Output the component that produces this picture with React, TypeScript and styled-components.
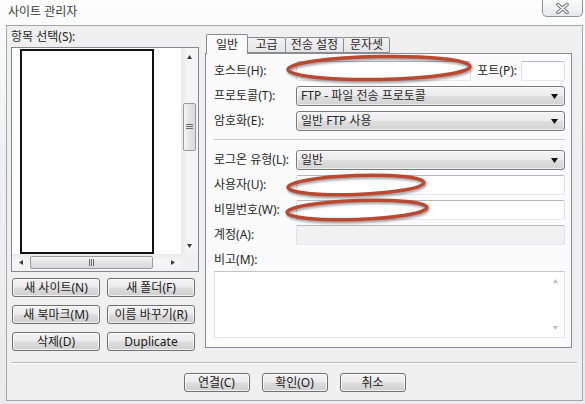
import styled, { createGlobalStyle } from 'styled-components'

const GlobalStyle = createGlobalStyle`
  html, body {
    margin: 0;
    padding: 0;
  }
  body {
    background: #ffffff;
    font-family: "Noto Sans", "Noto Sans CJK KR", sans-serif;
    font-size: 12px;
    color: #262626;
  }
`

const Frame = styled.div`
  position: relative;
  width: 585px;
  height: 404px;
  display: flex;
  flex-direction: column;
  background: linear-gradient(#fdfdfd, #eef0f3 40%, #e9ecef);
  overflow: hidden;
`

const TitleBar = styled.div`
  height: 25px;
  display: flex;
  justify-content: space-between;
  align-items: flex-start;
  padding-left: 8px;
  box-sizing: border-box;
`

const TitleText = styled.span`
  line-height: 24px;
  color: #3a3a3a;
`

const CloseButton = styled.div`
  width: 41px;
  height: 17px;
  margin-right: 2px;
  box-sizing: border-box;
  border: 1px solid #8f9296;
  border-top: none;
  border-radius: 0 0 5px 5px;
  background: linear-gradient(#fbfbfb, #e6e8eb);
  display: flex;
  align-items: center;
  justify-content: center;
`

const Client = styled.div`
  flex: 1;
  margin: 0 2px 3px 6px;
  padding: 3px 10px 0 4px;
  border: 1px solid #a3a6aa;
  background: #f0f0f0;
  display: flex;
  flex-direction: column;
`

const MainRow = styled.div`
  display: flex;
  gap: 6px;
`

const LeftColumn = styled.div`
  width: 188px;
  display: flex;
  flex-direction: column;
`

const SectionLabel = styled.div`
  line-height: 16px;
  height: 16px;
`

const SiteList = styled.div`
  margin-top: 2px;
  height: 225px;
  box-sizing: border-box;
  border: 1px solid #828790;
  background: #fff;
  display: grid;
  grid-template-columns: 1fr 17px;
  grid-template-rows: 1fr 17px;
`

const ListContent = styled.div`
  padding: 1px 0 0 8px;
`

const MaskedTree = styled.div`
  width: 134px;
  height: 205px;
  box-sizing: border-box;
  border: 2px solid #111;
`

const ScrollBar = styled.div<{ $vertical?: boolean }>`
  display: flex;
  flex-direction: ${(p) => (p.$vertical ? 'column' : 'row')};
  background: ${(p) =>
    p.$vertical
      ? 'linear-gradient(to right, #e9e9e9, #f6f6f6 40%, #f2f2f2)'
      : 'linear-gradient(#e9e9e9, #f6f6f6 40%, #f2f2f2)'};
`

const ScrollArrow = styled.div`
  width: 17px;
  height: 17px;
  flex: none;
  display: flex;
  align-items: center;
  justify-content: center;
`

const ScrollSpace = styled.div`
  flex: 1;
`

const Thumb = styled.div<{ $vertical?: boolean }>`
  box-sizing: border-box;
  border: 1px solid #9b9b9b;
  border-radius: 2px;
  display: flex;
  align-items: center;
  justify-content: center;
  ${(p) =>
    p.$vertical
      ? `
    margin: 38px 2px 0 2px;
    height: 48px;
    background: linear-gradient(to right, #f6f6f6, #e4e4e4 50%, #d9d9d9);
  `
      : `
    margin: 2px 0 2px 1px;
    width: 123px;
    background: linear-gradient(#f6f6f6, #e4e4e4 50%, #d9d9d9);
  `}
`

const Corner = styled.div`
  background: #f0f0f0;
`

const ButtonGrid = styled.div`
  margin: 6px 0 0 1px;
  display: grid;
  grid-template-columns: 88px 88px;
  column-gap: 7px;
  row-gap: 8px;
`

const PushButton = styled.div<{ $width?: number }>`
  height: 19px;
  ${(p) => (p.$width ? `width: ${p.$width}px;` : '')}
  box-sizing: border-box;
  border: 1px solid #707070;
  border-radius: 3px;
  background: linear-gradient(#f3f3f3 0%, #ebebeb 48%, #dddddd 52%, #cfcfcf 100%);
  box-shadow: inset 0 0 0 1px rgba(255, 255, 255, 0.7);
  display: flex;
  align-items: center;
  justify-content: center;
  line-height: 17px;
  color: #1a1a1a;
  white-space: nowrap;
`

const RightColumn = styled.div`
  width: 367px;
  display: flex;
  flex-direction: column;
`

const TabStrip = styled.div`
  margin-top: 5px;
  height: 19px;
  padding-left: 1px;
  display: flex;
  align-items: flex-end;
  position: relative;
  z-index: 1;
`

const Tab = styled.div<{ $active?: boolean; $w: number }>`
  width: ${(p) => p.$w}px;
  height: ${(p) => (p.$active ? 20 : 16)}px;
  margin-bottom: ${(p) => (p.$active ? -1 : 0)}px;
  margin-left: ${(p) => (p.$active ? 0 : -1)}px;
  box-sizing: border-box;
  border: 1px solid #898c95;
  border-bottom: ${(p) => (p.$active ? 'none' : '1px solid #898c95')};
  border-radius: 2px 2px 0 0;
  background: ${(p) => (p.$active ? '#fbfbfb' : 'linear-gradient(#f3f3f3, #e4e4e4)')};
  display: flex;
  align-items: center;
  justify-content: center;
  line-height: 14px;
  white-space: nowrap;
  overflow: hidden;
  &:first-child {
    margin-left: 0;
  }
`

const TabPanel = styled.div`
  height: 295px;
  box-sizing: border-box;
  border: 1px solid #898c95;
  background: #fbfbfb;
  padding: 7px 6px 0 8px;
  display: flex;
  flex-direction: column;
`

const FormGrid = styled.div`
  display: grid;
  grid-template-columns: 82px 1fr;
  row-gap: 5px;
  align-items: center;
`

const Label = styled.span`
  line-height: 20px;
  white-space: nowrap;
`

const HostRow = styled.div`
  display: flex;
  align-items: center;
`

const PortLabel = styled.span`
  margin: 0 4px 0 6px;
  line-height: 20px;
`

const TextBox = styled.div<{ $disabled?: boolean; $width?: number }>`
  height: 20px;
  box-sizing: border-box;
  ${(p) => (p.$width ? `width: ${p.$width}px; flex: none;` : 'flex: 1;')}
  border: 1px solid;
  border-color: #b5b8be #dcdfe5 #e5e8ec #dcdfe5;
  border-radius: 2px;
  background: ${(p) => (p.$disabled ? '#f1f1f1' : '#ffffff')};
`

const ComboBox = styled.div`
  height: 20px;
  box-sizing: border-box;
  border: 1px solid #7a7a7a;
  border-radius: 3px;
  background: linear-gradient(#f4f4f4 0%, #ececec 48%, #dedede 52%, #d3d3d3 100%);
  box-shadow: inset 0 0 0 1px rgba(255, 255, 255, 0.6);
  display: flex;
  align-items: center;
  justify-content: space-between;
  padding: 0 6px 0 4px;
  line-height: 18px;
  white-space: nowrap;
`

const Divider = styled.div`
  margin: 8px 0 9px 0;
  border-top: 1px solid #cacaca;
  border-bottom: 1px solid #ffffff;
`

const NotesLabel = styled.div`
  margin-top: 7px;
  line-height: 16px;
`

const NotesBox = styled.div`
  margin-top: 3px;
  height: 67px;
  box-sizing: border-box;
  border: 1px solid;
  border-color: #c0c4ca #dfe2e6 #e3e6ea #dfe2e6;
  background: #fff;
  display: flex;
  justify-content: flex-end;
`

const NotesScroll = styled.div`
  width: 17px;
  padding: 7px 0 7px;
  display: flex;
  flex-direction: column;
  justify-content: space-between;
  align-items: center;
`

const FooterRule = styled.div`
  margin: 11px -5px 0 0;
  border-top: 1px solid #b9b9b9;
  border-bottom: 1px solid #ffffff;
`

const FooterButtons = styled.div`
  margin-top: 9px;
  padding-left: 6px;
  display: flex;
  justify-content: center;
  gap: 12px;
`

const Overlay = styled.svg`
  position: absolute;
  left: 0;
  top: 0;
  pointer-events: none;
  filter: drop-shadow(1px 2px 1px rgba(0, 0, 0, 0.35));
`

type Dir = 'up' | 'down' | 'left' | 'right'

const Arrow = ({ dir, size = 5, color = '#3c3c3c' }: { dir: Dir; size?: number; color?: string }) => {
  const h = Math.ceil(size / 2) + 1
  const horiz = dir === 'left' || dir === 'right'
  const w = horiz ? h : size
  const hh = horiz ? size : h
  const pts = {
    up: `0,${h} ${size / 2},0 ${size},${h}`,
    down: `0,0 ${size},0 ${size / 2},${h}`,
    left: `${h},0 ${h},${size} 0,${size / 2}`,
    right: `0,0 0,${size} ${h},${size / 2}`,
  }[dir]
  return (
    <svg width={w} height={hh} viewBox={`0 0 ${w} ${hh}`}>
      <polygon points={pts} fill={color} />
    </svg>
  )
}

const Grip = ({ vertical }: { vertical?: boolean }) =>
  vertical ? (
    <svg width="7" height="6" viewBox="0 0 7 6">
      <path d="M0 0.5H7M0 2.5H7M0 4.5H7" stroke="#6a6a6a" strokeWidth="1" />
    </svg>
  ) : (
    <svg width="6" height="7" viewBox="0 0 6 7">
      <path d="M0.5 0V7M2.5 0V7M4.5 0V7" stroke="#6a6a6a" strokeWidth="1" />
    </svg>
  )

const CloseGlyph = () => (
  <svg width="13" height="11" viewBox="0 0 13 11">
    <path d="M2 1.5L11 9.5M11 1.5L2 9.5" stroke="#707274" strokeWidth="3.6" strokeLinecap="round" />
    <path d="M2 1.5L11 9.5M11 1.5L2 9.5" stroke="#ffffff" strokeWidth="1.6" strokeLinecap="round" />
  </svg>
)

const Combo = ({ text }: { text: string }) => (
  <ComboBox>
    <span>{text}</span>
    <Arrow dir="down" size={7} color="#111" />
  </ComboBox>
)

const App = () => {
  return (
    <>
      <GlobalStyle />
      <Frame>
        <TitleBar>
          <TitleText>사이트 관리자</TitleText>
          <CloseButton>
            <CloseGlyph />
          </CloseButton>
        </TitleBar>

        <Client>
          <MainRow>
            <LeftColumn>
              <SectionLabel>항목 선택(S):</SectionLabel>
              <SiteList>
                <ListContent>
                  <MaskedTree />
                </ListContent>
                <ScrollBar $vertical>
                  <ScrollArrow>
                    <Arrow dir="up" />
                  </ScrollArrow>
                  <Thumb $vertical>
                    <Grip vertical />
                  </Thumb>
                  <ScrollSpace />
                  <ScrollArrow>
                    <Arrow dir="down" />
                  </ScrollArrow>
                </ScrollBar>
                <ScrollBar>
                  <ScrollArrow>
                    <Arrow dir="left" />
                  </ScrollArrow>
                  <Thumb>
                    <Grip />
                  </Thumb>
                  <ScrollSpace />
                  <ScrollArrow>
                    <Arrow dir="right" />
                  </ScrollArrow>
                </ScrollBar>
                <Corner />
              </SiteList>
              <ButtonGrid>
                <PushButton>새 사이트(N)</PushButton>
                <PushButton>새 폴더(F)</PushButton>
                <PushButton>새 북마크(M)</PushButton>
                <PushButton>이름 바꾸기(R)</PushButton>
                <PushButton>삭제(D)</PushButton>
                <PushButton>Duplicate</PushButton>
              </ButtonGrid>
            </LeftColumn>

            <RightColumn>
              <TabStrip>
                <Tab $active $w={42}>일반</Tab>
                <Tab $w={39}>고급</Tab>
                <Tab $w={59}>전송 설정</Tab>
                <Tab $w={47}>문자셋</Tab>
              </TabStrip>
              <TabPanel>
                <FormGrid>
                  <Label>호스트(H):</Label>
                  <HostRow>
                    <TextBox />
                    <PortLabel>포트(P):</PortLabel>
                    <TextBox $width={44} />
                  </HostRow>
                  <Label>프로토콜(T):</Label>
                  <Combo text="FTP - 파일 전송 프로토콜" />
                  <Label>암호화(E):</Label>
                  <Combo text="일반 FTP 사용" />
                </FormGrid>
                <Divider />
                <FormGrid>
                  <Label>로그온 유형(L):</Label>
                  <Combo text="일반" />
                  <Label>사용자(U):</Label>
                  <TextBox />
                  <Label>비밀번호(W):</Label>
                  <TextBox />
                  <Label>계정(A):</Label>
                  <TextBox $disabled />
                </FormGrid>
                <NotesLabel>비고(M):</NotesLabel>
                <NotesBox>
                  <NotesScroll>
                    <Arrow dir="up" color="#bdbdbd" />
                    <Arrow dir="down" color="#bdbdbd" />
                  </NotesScroll>
                </NotesBox>
              </TabPanel>
            </RightColumn>
          </MainRow>

          <FooterRule />
          <FooterButtons>
            <PushButton $width={66}>연결(C)</PushButton>
            <PushButton $width={66}>확인(O)</PushButton>
            <PushButton $width={66}>취소</PushButton>
          </FooterButtons>
        </Client>

        <Overlay width="585" height="404" viewBox="0 0 585 404">
          <g fill="none" stroke="#bb4830" strokeWidth="3.5">
            <ellipse cx="379" cy="68" rx="91" ry="11.5" transform="rotate(-1 379 68)" />
            <ellipse cx="356" cy="185" rx="68" ry="9.5" transform="rotate(-2 356 185)" />
            <ellipse cx="357" cy="210" rx="70" ry="9.5" transform="rotate(-2 357 210)" />
          </g>
        </Overlay>
      </Frame>
    </>
  )
}

export default App
